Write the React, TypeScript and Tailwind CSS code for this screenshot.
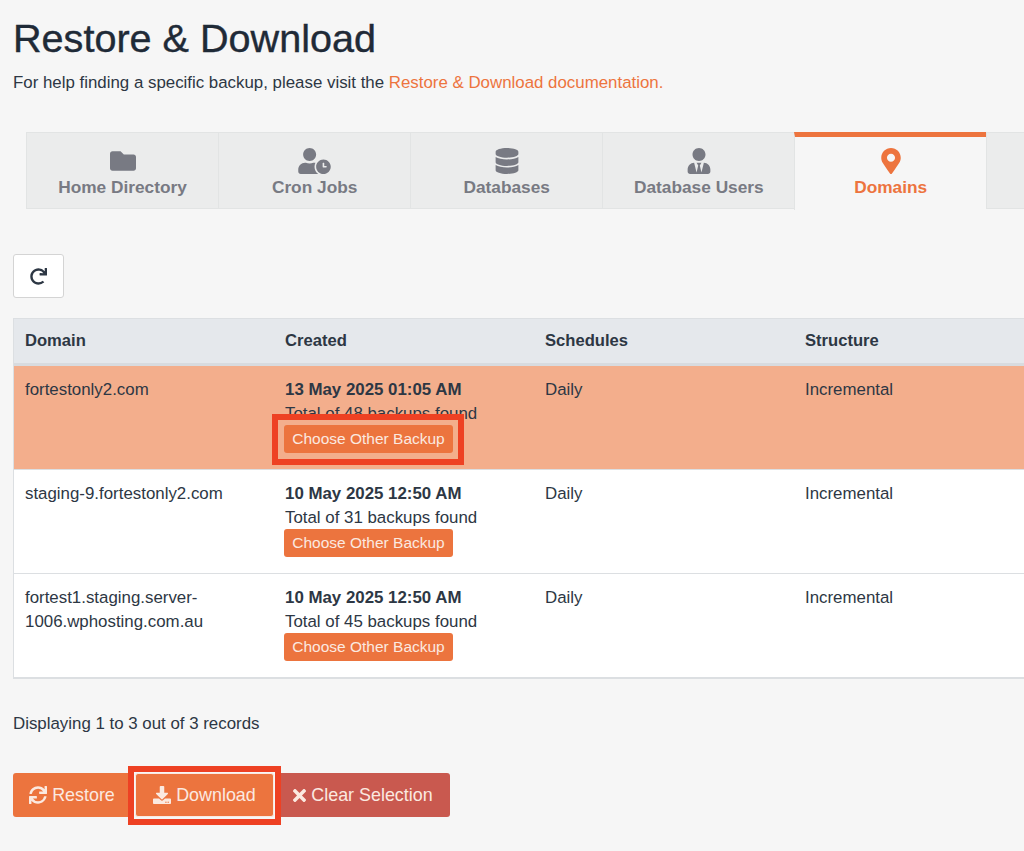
import { FaDatabase, FaDownload, FaFolder, FaMapMarkerAlt, FaRedo, FaSync, FaTimes, FaUserClock, FaUserTie } from "react-icons/fa";

const tabs = [
  { label: "Home Directory", icon: FaFolder, size: "h-[26px] w-[26px]" },
  { label: "Cron Jobs", icon: FaUserClock, size: "h-[26px] w-[33px]" },
  { label: "Databases", icon: FaDatabase, size: "h-[26px] w-[26px]" },
  { label: "Database Users", icon: FaUserTie, size: "h-[26px] w-[26px]" },
];

const rows = [
  { domain: "fortestonly2.com", created: "13 May 2025 01:05 AM", total: "Total of 48 backups found", active: true },
  { domain: "staging-9.fortestonly2.com", created: "10 May 2025 12:50 AM", total: "Total of 31 backups found", active: false },
  { domain: "fortest1.staging.server-1006.wphosting.com.au", created: "10 May 2025 12:50 AM", total: "Total of 45 backups found", active: false },
];

function ChooseButton({ marked }: { marked: boolean }) {
  return (
    <div className="relative -ml-px -mt-px w-fit">
      {marked && <span className="absolute -left-[12px] -right-[11px] -top-[11px] -bottom-[12px] border-[6px] border-[#ee4123] bg-[#f3ae8c]" />}
      <button className="relative h-[28px] w-[169px] rounded-[3px] bg-[#ec743e] text-[15.5px] text-[#fbe9e0]">Choose Other Backup</button>
    </div>
  );
}

export default function App() {
  return (
    <div className="h-[851px] w-[1024px] overflow-hidden bg-[#f6f6f6] pl-[13px] pt-[15px] font-['Liberation_Sans',Arial,sans-serif] text-[#2d3744]">
      <h1 className="text-[39.6px] font-normal leading-[46px] text-[#1f2a37] [-webkit-text-stroke:0.4px_#1f2a37]">Restore &amp; Download</h1>
      <p className="mt-[10px] text-[16.87px] leading-[24px]">
        For help finding a specific backup, please visit the <span className="text-[#ed743e]">Restore &amp; Download documentation.</span>
      </p>

      {/* Tabs */}
      <div className="ml-[13px] mt-[37px] flex h-[78px] w-[1100px]">
        {tabs.map((t) => (
          <div key={t.label} className="flex h-[77px] w-[192.1px] flex-col items-center border border-r-0 border-[#e2e4e4] bg-[#ebecec] pt-[15px] text-[#787a83]">
            <t.icon className={t.size} />
            <span className="mt-[2px] text-[17.3px] font-bold leading-[22px]">{t.label}</span>
          </div>
        ))}
        <div className="flex h-[78px] w-[191.6px] flex-col items-center border-l border-t-[5px] border-[#e2e4e4] border-t-[#ed743e] pt-[11px] text-[#ed743e]">
          <FaMapMarkerAlt className="h-[26px] w-[26px]" />
          <span className="mt-[2px] text-[17.3px] font-bold leading-[22px]">Domains</span>
        </div>
        <div className="h-[77px] flex-1 border-l border-y border-[#e2e4e4] bg-[#ebecec]" />
      </div>

      <button className="mt-[44px] flex h-[44px] w-[51px] items-center justify-center rounded-[3px] border border-[#d4d4d4] bg-white text-[#2d3744]">
        <FaRedo className="h-[17px] w-[17px]" />
      </button>

      {/* Table */}
      <div className="mt-[20px] w-[1100px] border border-[#dcdfe2]">
        <div className="grid h-[47px] grid-cols-[260px_260px_260px_1fr] items-center border-b-[3px] border-[#d8dbdf] bg-[#e5e8ec] pl-[11px] text-[16.6px] font-bold text-[#2d3744]">
          <span>Domain</span>
          <span>Created</span>
          <span>Schedules</span>
          <span>Structure</span>
        </div>
        {rows.map((r) => (
          <div key={r.created + r.total} className={`grid h-[104px] grid-cols-[260px_260px_260px_1fr] border-b border-[#dcdfe2] pl-[11px] pt-[12px] text-[16.87px] leading-[24px] ${r.active ? "bg-[#f3ae8c]" : "bg-white"}`}>
            <span className="w-[215px] break-words">{r.domain}</span>
            <div>
              <div className="font-bold">{r.created}</div>
              <div>{r.total}</div>
              <ChooseButton marked={r.active} />
            </div>
            <span>Daily</span>
            <span>Incremental</span>
          </div>
        ))}
      </div>

      <p className="mt-[33px] text-[16.87px] leading-[24px]">Displaying 1 to 3 out of 3 records</p>

      {/* Actions */}
      <div className="mt-[37px] flex h-[44px] text-[17.9px] text-[#fbe9e0]">
        <button className="flex w-[122px] items-center justify-center gap-[5px] rounded-[3px] bg-[#ec743e] pr-[4px]">
          <FaSync className="h-[18px] w-[18px]" /> Restore
        </button>
        <div className="relative">
          <span className="absolute -inset-x-[7px] -top-[7px] -bottom-[8px] border-[6px] border-[#ee4123] bg-[#f6f6f6]" />
          <button className="relative flex h-[44px] w-[139px] items-center justify-center gap-[5px] rounded-[3px] border-[1.5px] border-[#fbe9e0] bg-[#ec743e]">
            <FaDownload className="h-[18px] w-[18px]" /> Download
          </button>
        </div>
        <button className="flex w-[176px] items-center justify-center gap-[2px] rounded-r-[3px] bg-[#c9594f] pr-[1px]">
          <FaTimes className="h-[19px] w-[19px]" /> Clear Selection
        </button>
      </div>
    </div>
  );
}
